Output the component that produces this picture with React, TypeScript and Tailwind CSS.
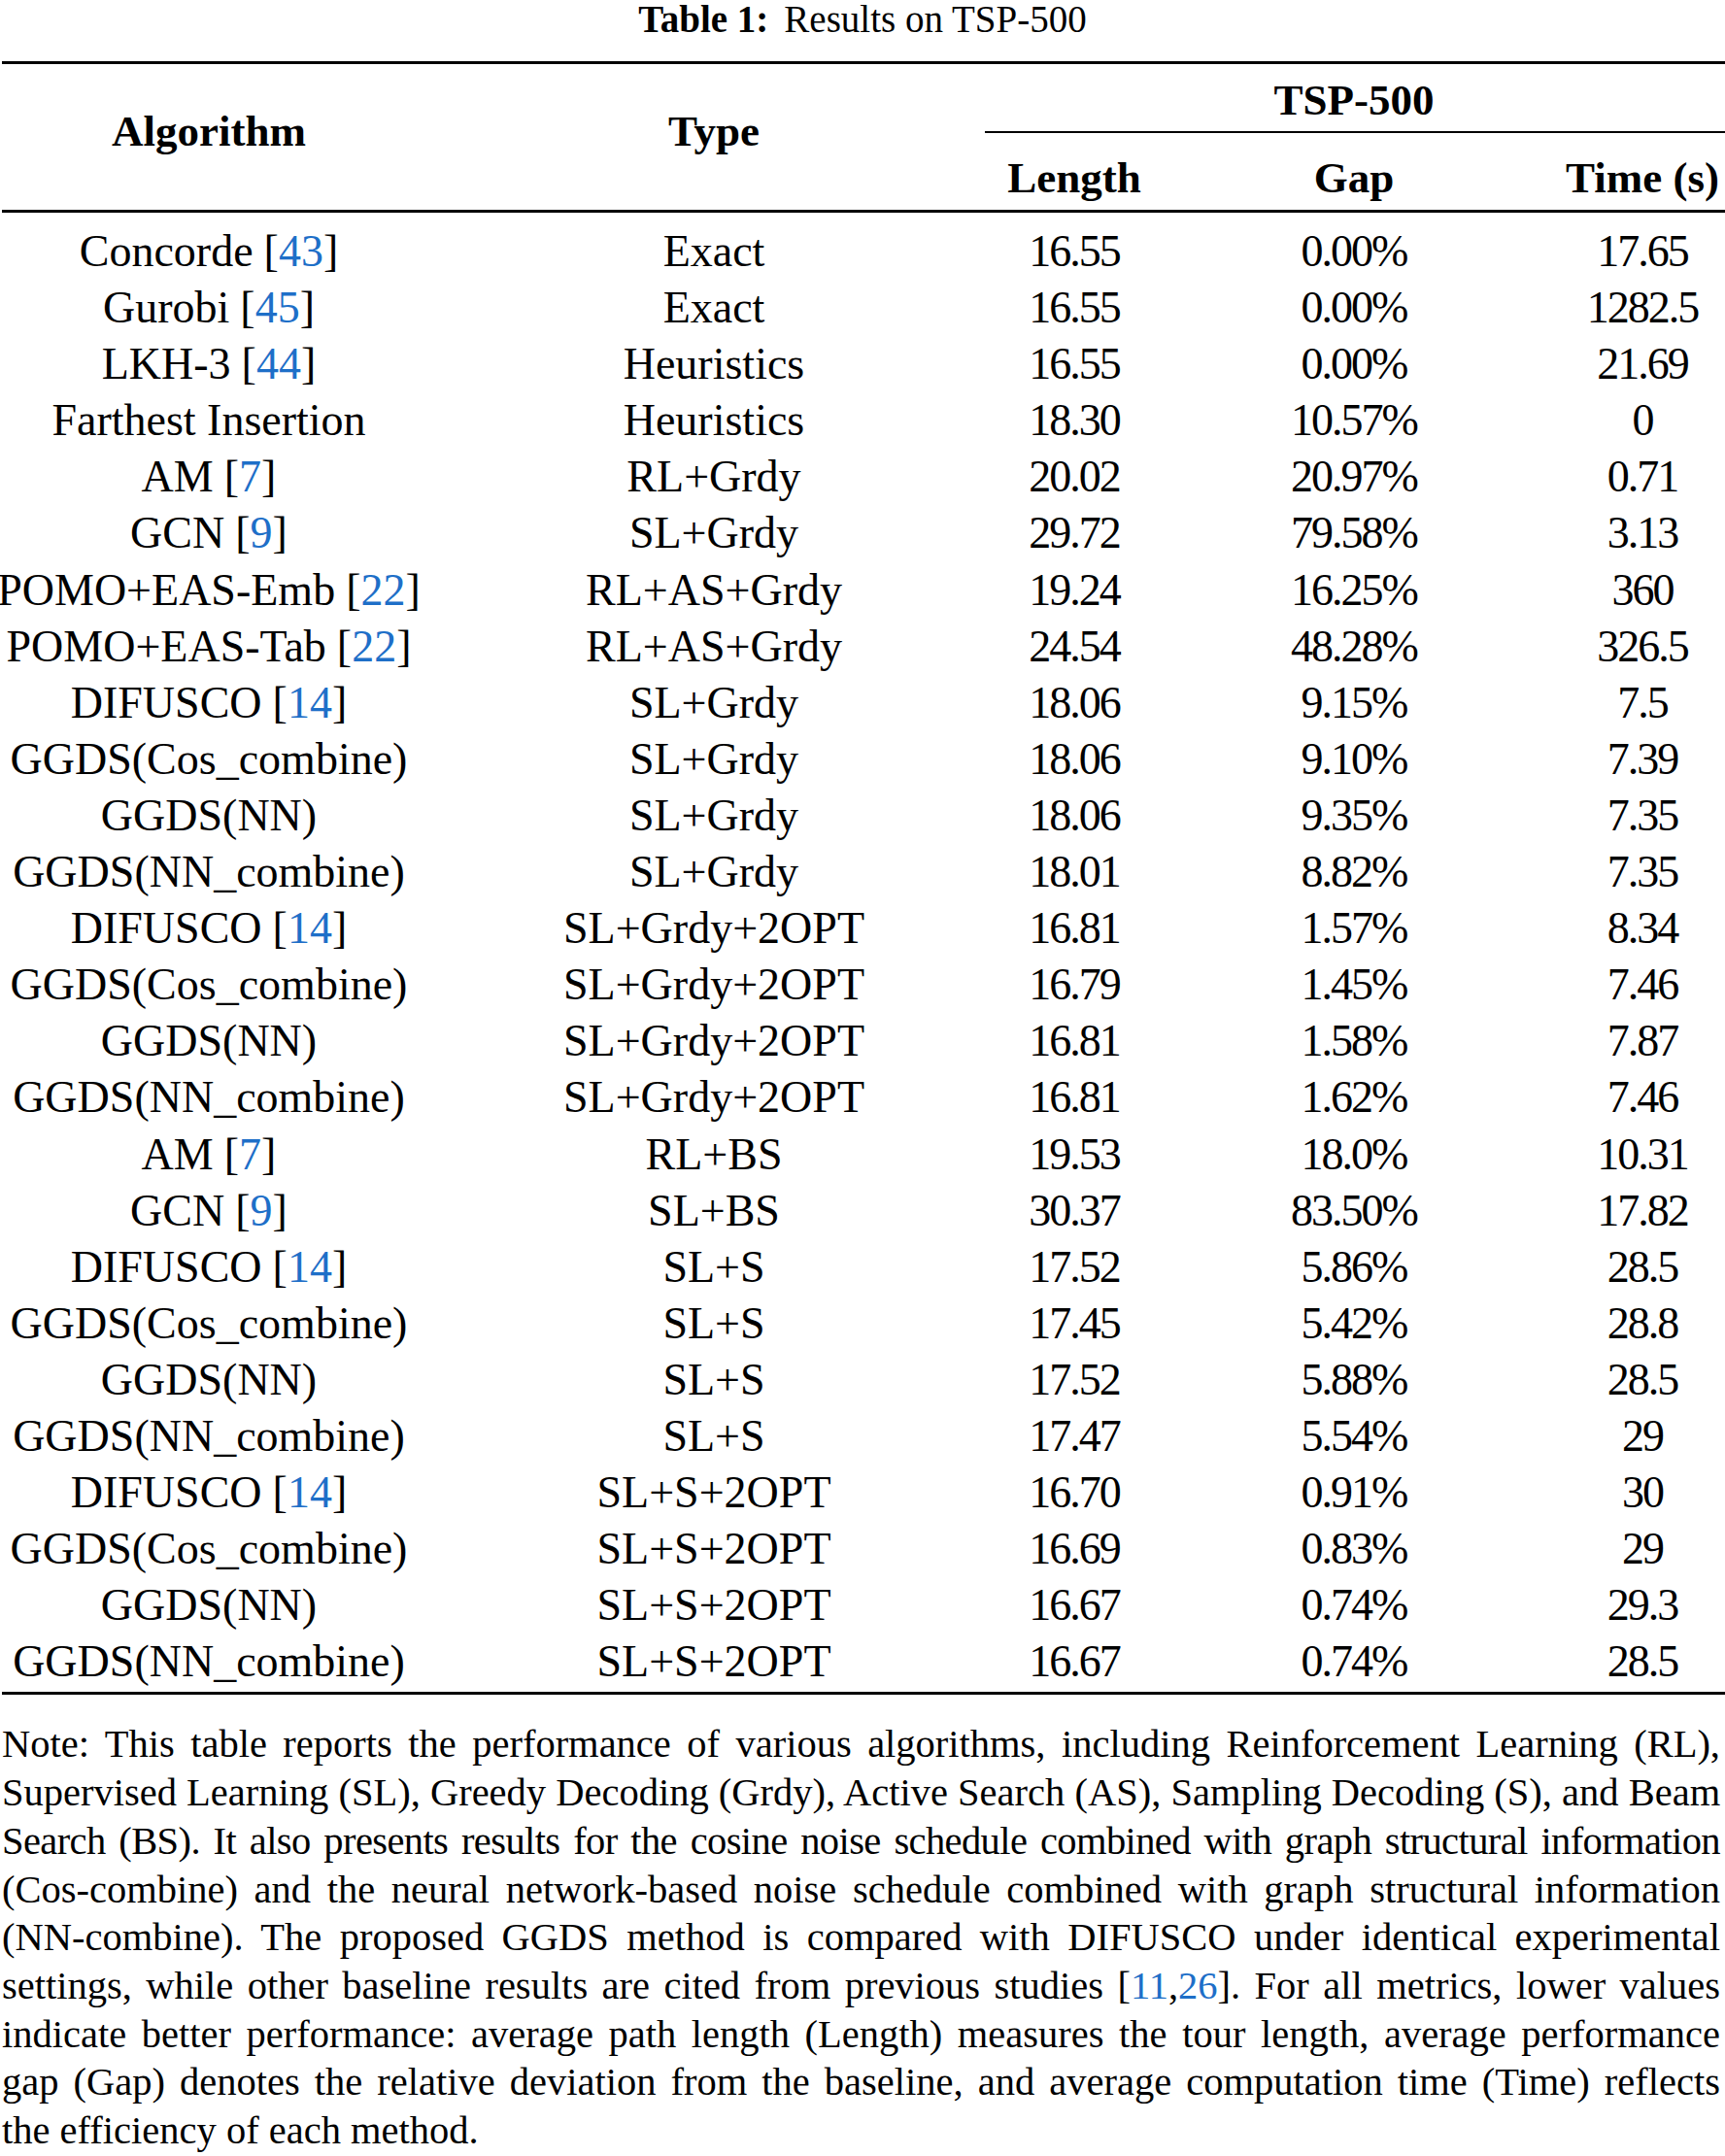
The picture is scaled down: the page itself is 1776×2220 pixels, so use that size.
import type {ReactNode} from "react";

type ResultRow = {
  name: string;
  cite?: string;
  type: string;
  length: string;
  gap: string;
  time: string;
};

const ROWS: ResultRow[] = [
  {name: "Concorde", cite: "43", type: "Exact", length: "16.55", gap: "0.00%", time: "17.65"},
  {name: "Gurobi", cite: "45", type: "Exact", length: "16.55", gap: "0.00%", time: "1282.5"},
  {name: "LKH-3", cite: "44", type: "Heuristics", length: "16.55", gap: "0.00%", time: "21.69"},
  {name: "Farthest Insertion", type: "Heuristics", length: "18.30", gap: "10.57%", time: "0"},
  {name: "AM", cite: "7", type: "RL+Grdy", length: "20.02", gap: "20.97%", time: "0.71"},
  {name: "GCN", cite: "9", type: "SL+Grdy", length: "29.72", gap: "79.58%", time: "3.13"},
  {name: "POMO+EAS-Emb", cite: "22", type: "RL+AS+Grdy", length: "19.24", gap: "16.25%", time: "360"},
  {name: "POMO+EAS-Tab", cite: "22", type: "RL+AS+Grdy", length: "24.54", gap: "48.28%", time: "326.5"},
  {name: "DIFUSCO", cite: "14", type: "SL+Grdy", length: "18.06", gap: "9.15%", time: "7.5"},
  {name: "GGDS(Cos_combine)", type: "SL+Grdy", length: "18.06", gap: "9.10%", time: "7.39"},
  {name: "GGDS(NN)", type: "SL+Grdy", length: "18.06", gap: "9.35%", time: "7.35"},
  {name: "GGDS(NN_combine)", type: "SL+Grdy", length: "18.01", gap: "8.82%", time: "7.35"},
  {name: "DIFUSCO", cite: "14", type: "SL+Grdy+2OPT", length: "16.81", gap: "1.57%", time: "8.34"},
  {name: "GGDS(Cos_combine)", type: "SL+Grdy+2OPT", length: "16.79", gap: "1.45%", time: "7.46"},
  {name: "GGDS(NN)", type: "SL+Grdy+2OPT", length: "16.81", gap: "1.58%", time: "7.87"},
  {name: "GGDS(NN_combine)", type: "SL+Grdy+2OPT", length: "16.81", gap: "1.62%", time: "7.46"},
  {name: "AM", cite: "7", type: "RL+BS", length: "19.53", gap: "18.0%", time: "10.31"},
  {name: "GCN", cite: "9", type: "SL+BS", length: "30.37", gap: "83.50%", time: "17.82"},
  {name: "DIFUSCO", cite: "14", type: "SL+S", length: "17.52", gap: "5.86%", time: "28.5"},
  {name: "GGDS(Cos_combine)", type: "SL+S", length: "17.45", gap: "5.42%", time: "28.8"},
  {name: "GGDS(NN)", type: "SL+S", length: "17.52", gap: "5.88%", time: "28.5"},
  {name: "GGDS(NN_combine)", type: "SL+S", length: "17.47", gap: "5.54%", time: "29"},
  {name: "DIFUSCO", cite: "14", type: "SL+S+2OPT", length: "16.70", gap: "0.91%", time: "30"},
  {name: "GGDS(Cos_combine)", type: "SL+S+2OPT", length: "16.69", gap: "0.83%", time: "29"},
  {name: "GGDS(NN)", type: "SL+S+2OPT", length: "16.67", gap: "0.74%", time: "29.3"},
  {name: "GGDS(NN_combine)", type: "SL+S+2OPT", length: "16.67", gap: "0.74%", time: "28.5"}
];

const GRID = "grid grid-cols-[430px_610px_132px_444px_160px]";

function Cite({children}: {children: ReactNode}) {
  return <span className="text-[#1e6fc8]">{children}</span>;
}

function Cell({children, className = ""}: {children: ReactNode; className?: string}) {
  return <div className={`flex items-center justify-center whitespace-nowrap ${className}`}>{children}</div>;
}

function NoteLine({children, last = false, className = ""}: {children: ReactNode; last?: boolean; className?: string}) {
  return (
    <div className={`whitespace-nowrap ${last ? "text-left" : "text-justify [text-align-last:justify]"} ${className}`}>
      {children}
    </div>
  );
}

export default function App() {
  return (
    <div className="w-[1776px] bg-white font-['Liberation_Serif',serif] text-black">
      <div className="h-[40px] text-center text-[39px] leading-[40px]">
        <span className="font-bold">Table 1:</span>
        <span className="ml-[16px]">Results on TSP-500</span>
      </div>

      <div className="mt-[23px] ml-[2px] h-[3px] bg-black" />

      <div className={`${GRID} grid-rows-[69px_2px_79px] text-[45px] font-bold`}>
        <Cell className="col-start-1 row-span-3 row-start-1 pb-[11px]">Algorithm</Cell>
        <Cell className="col-start-2 row-span-3 row-start-1 pb-[11px]">Type</Cell>
        <Cell className="col-span-3 col-start-3 row-start-1 pt-[7px] pr-[28px]">TSP-500</Cell>
        <div className="col-span-3 col-start-3 row-start-2 ml-[-26px] bg-black" />
        <Cell className="col-start-3 row-start-3 pt-[15px]">Length</Cell>
        <Cell className="col-start-4 row-start-3 pt-[15px]">Gap</Cell>
        <Cell className="col-start-5 row-start-3 pt-[15px] pr-[10px]">Time (s)</Cell>
      </div>

      <div className="ml-[2px] h-[3px] bg-black" />

      <div className="pt-[5px] pb-[8px] text-[46px]">
        {ROWS.map((row, index) => (
          <div key={index} className={`${GRID} h-[58.1px]`}>
            <Cell>
              {row.name}
              {row.cite ? (
                <span className="ml-[11px]">
                  [<Cite>{row.cite}</Cite>]
                </span>
              ) : null}
            </Cell>
            <Cell>{row.type}</Cell>
            <Cell className="tracking-[-2px]">{row.length}</Cell>
            <Cell className="tracking-[-2px]">{row.gap}</Cell>
            <Cell className="pr-[10px] tracking-[-2px]">{row.time}</Cell>
          </div>
        ))}
      </div>

      <div className="ml-[2px] h-[3px] bg-black" />

      <div className="mt-[26px] pr-[5px] pl-[2px] text-[40.5px] leading-[49.7px]">
        <NoteLine>
          Note: This table reports the performance of various algorithms, including Reinforcement Learning (RL),
        </NoteLine>
        <NoteLine>
          Supervised Learning (SL), Greedy Decoding (Grdy), Active Search (AS), Sampling Decoding (S), and Beam
        </NoteLine>
        <NoteLine className="tracking-[-0.6px]">
          Search (BS). It also presents results for the cosine noise schedule combined with graph structural information
        </NoteLine>
        <NoteLine>
          (Cos-combine) and the neural network-based noise schedule combined with graph structural information
        </NoteLine>
        <NoteLine>(NN-combine). The proposed GGDS method is compared with DIFUSCO under identical experimental</NoteLine>
        <NoteLine>
          settings, while other baseline results are cited from previous studies [<Cite>11</Cite>,<Cite>26</Cite>]. For
          all metrics, lower values
        </NoteLine>
        <NoteLine>
          indicate better performance: average path length (Length) measures the tour length, average performance
        </NoteLine>
        <NoteLine>
          gap (Gap) denotes the relative deviation from the baseline, and average computation time (Time) reflects
        </NoteLine>
        <NoteLine last>the efficiency of each method.</NoteLine>
      </div>
    </div>
  );
}
